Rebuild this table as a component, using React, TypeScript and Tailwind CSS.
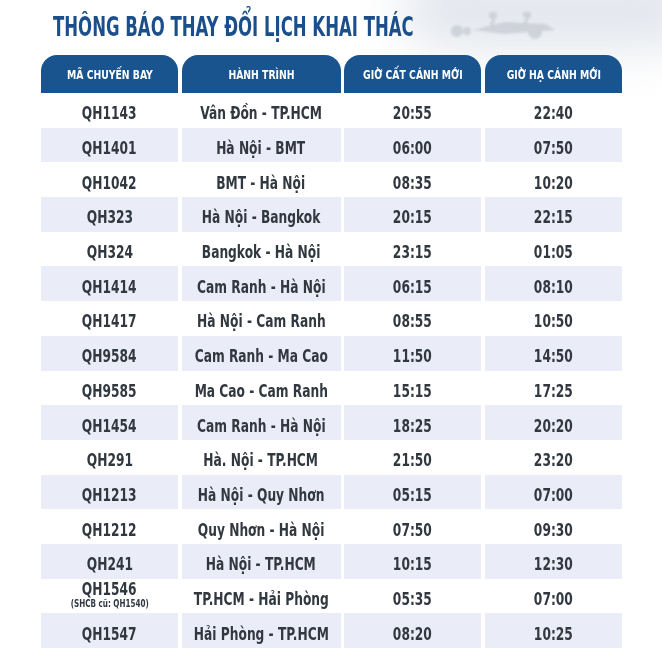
import React from "react";

const HEADERS = ["MÃ CHUYẾN BAY", "HÀNH TRÌNH", "GIỜ CẤT CÁNH MỚI", "GIỜ HẠ CÁNH MỚI"];

type Row = { code: string; note?: string; route: string; dep: string; arr: string };

const ROWS: Row[] = [
  { code: "QH1143", route: "Vân Đồn - TP.HCM", dep: "20:55", arr: "22:40" },
  { code: "QH1401", route: "Hà Nội - BMT", dep: "06:00", arr: "07:50" },
  { code: "QH1042", route: "BMT - Hà Nội", dep: "08:35", arr: "10:20" },
  { code: "QH323", route: "Hà Nội - Bangkok", dep: "20:15", arr: "22:15" },
  { code: "QH324", route: "Bangkok - Hà Nội", dep: "23:15", arr: "01:05" },
  { code: "QH1414", route: "Cam Ranh - Hà Nội", dep: "06:15", arr: "08:10" },
  { code: "QH1417", route: "Hà Nội - Cam Ranh", dep: "08:55", arr: "10:50" },
  { code: "QH9584", route: "Cam Ranh - Ma Cao", dep: "11:50", arr: "14:50" },
  { code: "QH9585", route: "Ma Cao - Cam Ranh", dep: "15:15", arr: "17:25" },
  { code: "QH1454", route: "Cam Ranh - Hà Nội", dep: "18:25", arr: "20:20" },
  { code: "QH291", route: "Hà. Nội - TP.HCM", dep: "21:50", arr: "23:20" },
  { code: "QH1213", route: "Hà Nội - Quy Nhơn", dep: "05:15", arr: "07:00" },
  { code: "QH1212", route: "Quy Nhơn - Hà Nội", dep: "07:50", arr: "09:30" },
  { code: "QH241", route: "Hà Nội - TP.HCM", dep: "10:15", arr: "12:30" },
  { code: "QH1546", note: "(SHCB cũ: QH1540)", route: "TP.HCM - Hải Phòng", dep: "05:35", arr: "07:00" },
  { code: "QH1547", route: "Hải Phòng - TP.HCM", dep: "08:20", arr: "10:25" },
];

const COLS = "grid grid-cols-[137px_159px_137px_137px] gap-x-[3.6px]";
// the poster uses a DIN-like condensed face; squeeze DejaVu Condensed to match
const SQUEEZE = "block whitespace-nowrap scale-x-[0.8]";

export default function App() {
  return (
    <div
      className="relative h-[666px] w-[662px] overflow-hidden bg-white"
      style={{ fontFamily: '"DejaVu Sans Condensed", "DejaVu Sans", sans-serif' }}
    >
      {/* faded plane backdrop, top right */}
      <div className="absolute right-[-40px] top-[-30px] h-[80px] w-[300px] rounded-full bg-[#e3e7ed] blur-xl" />
      <svg className="absolute left-[445px] top-[8px] blur-[1px]" width="120" height="32" viewBox="0 0 120 32">
        <g fill="#c3c9d2" opacity="0.7">
          <circle cx="12" cy="23" r="6" />
          <circle cx="22" cy="23" r="4" />
          <circle cx="90" cy="24" r="7" />
          <path d="M28 22 L60 14 L100 16 L110 22 L60 26 Z" />
          <rect x="44" y="4" width="8" height="6" rx="2" />
          <rect x="78" y="4" width="8" height="6" rx="2" />
          <path d="M47 10 L44 22 L48 22 L50 10 Z" />
          <path d="M81 10 L76 20 L80 20 L84 10 Z" />
        </g>
      </svg>

      <div className="relative flex flex-col pl-[41px]">
        <h1 className="ml-[12px] mt-[11px] block origin-left scale-x-[0.68] whitespace-nowrap text-[27px] font-bold leading-[32px] text-[#1b4f8b]">
          THÔNG BÁO THAY ĐỔI LỊCH KHAI THÁC
        </h1>

        <div className={`${COLS} mt-[12px]`}>
          {HEADERS.map((h) => (
            <div
              key={h}
              className="flex h-[38px] items-center justify-center rounded-t-[16px] bg-[#19548f] pt-[2px] text-[12px] font-bold text-white"
            >
              <span className="block whitespace-nowrap scale-x-[0.86]">{h}</span>
            </div>
          ))}
        </div>

        <div className="flex flex-col">
          {ROWS.map((r, i) => {
            const bg = i % 2 === 1 ? "bg-[#eaedf7]" : "bg-white";
            const cell = `flex h-[34.7px] flex-col items-center justify-center pt-[6px] ${bg} text-[17px] font-bold text-[#313840]`;
            return (
              <div key={r.code} className={COLS}>
                <div
                  className={`flex h-[34.7px] flex-col items-center justify-center ${r.note ? "" : "pt-[6px]"} ${bg} text-[17px] font-bold text-[#313840]`}
                >
                  <span className={`${SQUEEZE} ${r.note ? "leading-[15px]" : "leading-[20px]"}`}>{r.code}</span>
                  {r.note && <span className={`${SQUEEZE} text-[10px] leading-[13px]`}>{r.note}</span>}
                </div>
                <div className={cell}>
                  <span className={`${SQUEEZE} leading-[20px]`}>{r.route}</span>
                </div>
                <div className={cell}>
                  <span className={`${SQUEEZE} leading-[20px]`}>{r.dep}</span>
                </div>
                <div className={cell}>
                  <span className={`${SQUEEZE} leading-[20px]`}>{r.arr}</span>
                </div>
              </div>
            );
          })}
        </div>
      </div>
    </div>
  );
}
